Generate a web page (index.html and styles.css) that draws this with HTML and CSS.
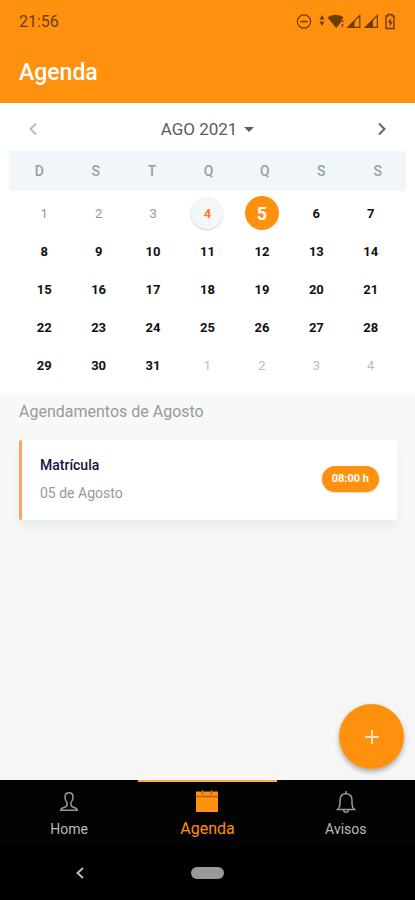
FILE: index.html
```html
<!DOCTYPE html>
<html lang="pt-BR">
<head>
  <meta charset="UTF-8">
  <meta name="viewport" content="width=device-width, initial-scale=1.0">
  <link rel="stylesheet" href="styles.css">
  <title>Agenda</title>
</head>
<body>

<header class="top">
  <div class="status">
    <span class="clock">21:56</span>
    <svg class="status-icons" width="102" height="18" viewBox="0 0 102 18">
      <circle cx="9" cy="8.500" r="6.700" fill="none" stroke="#6b3d05" stroke-width="1.200"/>
      <path d="M5.500 8.500h7" stroke="#6b3d05" stroke-width="1.500"/>
      <path d="M24.500 6.500 27 2l2.500 4.500zM24.500 8.500 27 13l2.500-4.500z" fill="#6b3d05"/>
      <path d="M32.500 4.500C37 .8 44 .8 48.500 4.500l-2 2.500-1 3-4.300 5z" fill="#6b3d05"/>
      <path d="M47.500 7v2.500M47.500 11v2.500" stroke="#6b3d05" stroke-width="1.500"/>
      <path d="M53 14.300 64.800 2.500v11.800z" fill="none" stroke="#6b3d05" stroke-width="1.200"/>
      <path d="M51.500 15l8-8v8z" fill="#6b3d05"/>
      <path d="M70.500 14.300 82.300 2.500v11.800z" fill="none" stroke="#6b3d05" stroke-width="1.200"/>
      <path d="M69 15l9-9v9z" fill="#6b3d05"/>
      <path d="M91 3h2V1.500h4V3h2v12.500h-8z" fill="none" stroke="#6b3d05" stroke-width="1.400"/>
      <path d="M95.700 5 92.800 9.500h2v4l3-4.800h-2.100z" fill="#6b3d05"/>
    </svg>
  </div>
  <h1 class="title">Agenda</h1>
</header>

<main class="content">
  <section class="calendar">
    <div class="month-bar">
      <button class="arrow disabled" aria-label="Mês anterior">
        <svg width="10" height="14" viewBox="0 0 10 14"><path d="M8 1.500 2.500 7 8 12.500"/></svg>
      </button>
      <button class="month">AGO 2021
        <svg width="10" height="5" viewBox="0 0 10 5"><path d="M0 0h10L5 5z"/></svg>
      </button>
      <button class="arrow" aria-label="Próximo mês">
        <svg width="10" height="14" viewBox="0 0 10 14"><path d="M2 1.500 7.500 7 2 12.500"/></svg>
      </button>
    </div>
    <table class="days">
      <thead>
        <tr><th>D</th><th>S</th><th>T</th><th>Q</th><th>Q</th><th>S</th><th>S</th></tr>
      </thead>
      <tbody>
        <tr>
          <td><button class="day past">1</button></td>
          <td><button class="day past">2</button></td>
          <td><button class="day past">3</button></td>
          <td><button class="day today">4</button></td>
          <td><button class="day selected">5</button></td>
          <td><button class="day">6</button></td>
          <td><button class="day">7</button></td>
        </tr>
        <tr>
          <td><button class="day">8</button></td>
          <td><button class="day">9</button></td>
          <td><button class="day">10</button></td>
          <td><button class="day">11</button></td>
          <td><button class="day">12</button></td>
          <td><button class="day">13</button></td>
          <td><button class="day">14</button></td>
        </tr>
        <tr>
          <td><button class="day">15</button></td>
          <td><button class="day">16</button></td>
          <td><button class="day">17</button></td>
          <td><button class="day">18</button></td>
          <td><button class="day">19</button></td>
          <td><button class="day">20</button></td>
          <td><button class="day">21</button></td>
        </tr>
        <tr>
          <td><button class="day">22</button></td>
          <td><button class="day">23</button></td>
          <td><button class="day">24</button></td>
          <td><button class="day">25</button></td>
          <td><button class="day">26</button></td>
          <td><button class="day">27</button></td>
          <td><button class="day">28</button></td>
        </tr>
        <tr>
          <td><button class="day">29</button></td>
          <td><button class="day">30</button></td>
          <td><button class="day">31</button></td>
          <td><button class="day next">1</button></td>
          <td><button class="day next">2</button></td>
          <td><button class="day next">3</button></td>
          <td><button class="day next">4</button></td>
        </tr>
      </tbody>
    </table>
  </section>

  <section class="events">
    <h2 class="events-title">Agendamentos de Agosto</h2>
    <article class="event">
      <div>
        <h3 class="event-name">Matrícula</h3>
        <p class="event-date">05 de Agosto</p>
      </div>
      <span class="event-time">08:00 h</span>
    </article>
  </section>

  <button class="fab" aria-label="Adicionar">
    <svg width="14" height="14" viewBox="0 0 14 14"><path d="M7 0v14M0 7h14"/></svg>
  </button>
</main>

<nav class="tabs">
  <a class="tab" href="#home">
    <svg width="20" height="22" viewBox="0 0 20 22"><path d="M8 14.500v-2C6.500 11 6 9 6 7c0-2.700 1.500-4.300 4-4.300S14 4.300 14 7c0 2-.5 4-2 5.500v2c0 2 1 2.300 3 3 2 .5 3 .8 3.300 2.800H1.700C2 18.300 3 18 5 17.500c2-.7 3-1 3-3z"/></svg>
    Home
  </a>
  <a class="tab active" href="#agenda">
    <svg width="22" height="22" viewBox="0 0 22 22"><path d="M0 1.500h22V22H0z"/><path class="cut" d="M6.500 0v4.500M15.500 0v4.500M0 6.500h22"/></svg>
    Agenda
  </a>
  <a class="tab" href="#avisos">
    <svg width="20" height="24" viewBox="0 0 20 24"><path d="M10 1v2.500M1.500 19.500h17c-2-1.500-2.500-3.500-2.500-6.500v-2.500c0-4-2.300-6.700-6-6.700s-6 2.700-6 6.700V13c0 3-.5 5-2.500 6.500zM7.700 20c0 3 4.600 3 4.600 0"/></svg>
    Avisos
  </a>
</nav>

<footer class="system">
  <button class="back" aria-label="Voltar">
    <svg width="8" height="12" viewBox="0 0 8 12"><path d="M7 1 1.500 6 7 11"/></svg>
  </button>
  <button class="pill" aria-label="Início"></button>
</footer>

</body>
</html>
```

FILE: styles.css
```css
* {
  box-sizing: border-box;
}

body {
  margin: 0;
  min-height: 100vh;
  display: flex;
  flex-direction: column;
  font-family: Roboto, "Liberation Sans", sans-serif;
  background-color: #f6f6f6;
}

h1, h2, h3, p {
  margin: 0;
}

button {
  font-family: inherit;
  border: none;
  padding: 0;
  background: none;
  cursor: pointer;
}

svg {
  fill: none;
}

/* header */
.top {
  background-color: #ff910f;
  padding: 0 18px 0 19px;
}

.status {
  display: flex;
  align-items: center;
  justify-content: space-between;
  height: 43px;
}

.clock {
  font-size: 16px;
  color: #6b3d05;
}

.title {
  font-size: 23px;
  line-height: 60px;
  font-weight: 500;
  color: #fff;
}

/* calendar */
.content {
  position: relative;
  flex: 1;
}

.calendar {
  background-color: #fff;
  padding: 4px 9px 9px;
}

.month-bar {
  display: flex;
  align-items: center;
  justify-content: space-between;
  height: 44px;
  padding: 0 18px;
}

.month {
  display: flex;
  align-items: center;
  gap: 7px;
  font-size: 17px;
  color: #5c5c5c;
}

.month svg {
  fill: #5c5c5c;
}

.arrow {
  display: flex;
  padding: 4px 1px;
}

.arrow svg {
  stroke: #666;
  stroke-width: 2;
}

.arrow.disabled svg {
  stroke: #bbb;
}

.days, thead, tbody {
  display: block;
}

tr {
  display: grid;
  grid-template-columns: repeat(7, 1fr);
}

thead {
  padding-left: 2px;
  background-color: #f1f6fa;
  line-height: 40px;
}

th {
  padding: 0;
  font-size: 14px;
  font-weight: 500;
  color: #98a0a4;
}

tbody {
  padding: 3px 8px 0;
}

td {
  display: flex;
  align-items: center;
  justify-content: center;
  height: 38px;
  padding: 0;
}

.day {
  width: 34px;
  height: 34px;
  font-size: 13px;
  font-weight: 700;
  border-radius: 50%;
  color: #111;
}

.day.past {
  font-weight: 400;
  color: #999;
}

.day.next {
  font-weight: 400;
  color: #bbb;
}

.day.today {
  width: 32px;
  height: 32px;
  background-color: #f4f7f9;
  box-shadow: 0 1px 2px rgba(0, 0, 0, 0.2);
  color: #ff7a1a;
}

.day.selected {
  background-color: #ff910f;
  color: #fff;
  font-size: 18px;
}

/* events */
.events {
  background-color: #f6f9f8;
  padding: 9px 18px 24px 19px;
}

.events-title {
  font-size: 16px;
  line-height: 20px;
  font-weight: 400;
  color: #999;
}

.event {
  display: flex;
  align-items: center;
  justify-content: space-between;
  margin-top: 18px;
  padding: 13px 18px 15px;
  background-color: #fff;
  border-left: 3px solid #ffa366;
  border-radius: 2px;
  box-shadow: 0 8px 10px rgba(60, 80, 80, 0.07);
}

.event-name {
  font-size: 14px;
  line-height: 24px;
  font-weight: 500;
  color: #14143c;
}

.event-date {
  margin-top: 4px;
  font-size: 14px;
  line-height: 24px;
  color: #999;
}

.event-time {
  padding: 0 10px;
  font-size: 11px;
  line-height: 26px;
  font-weight: 700;
  color: #fff;
  background-color: #ff910f;
  border-radius: 13px;
  box-shadow: 0 1px 2px rgba(0, 0, 0, 0.15);
}

.fab {
  position: absolute;
  right: 11px;
  bottom: 11px;
  display: flex;
  align-items: center;
  justify-content: center;
  width: 65px;
  height: 65px;
  border-radius: 50%;
  background-color: #ff910f;
  box-shadow: 0 3px 5px rgba(0, 0, 0, 0.3);
}

.fab svg {
  stroke: #ffe3c2;
  stroke-width: 2;
}

/* bottom bars */
.tabs {
  display: flex;
  background-color: #030303;
}

.tab {
  flex: 1;
  display: flex;
  flex-direction: column;
  align-items: center;
  justify-content: space-between;
  height: 65px;
  padding: 8px 0 5px;
  border-top: 2px solid #030303;
  font-size: 14px;
  line-height: 22px;
  text-decoration: none;
  color: #bbb;
}

.tab svg {
  stroke: #999;
  stroke-width: 1.5;
}

.tab.active {
  border-top-color: #ffa845;
  font-size: 16px;
  color: #ff910f;
}

.tab.active svg {
  fill: #ff910f;
  stroke: none;
}

.tab.active .cut {
  stroke: #b86203;
}

.system {
  display: grid;
  grid-template-columns: repeat(3, 1fr);
  align-items: center;
  height: 55px;
  background-color: #000;
}

.back {
  display: flex;
  justify-content: center;
  padding-left: 22px;
}

.back svg {
  stroke: #bbb;
  stroke-width: 2;
}

.pill {
  justify-self: center;
  width: 33px;
  height: 12px;
  border-radius: 6px;
  background-color: #999;
}
```
